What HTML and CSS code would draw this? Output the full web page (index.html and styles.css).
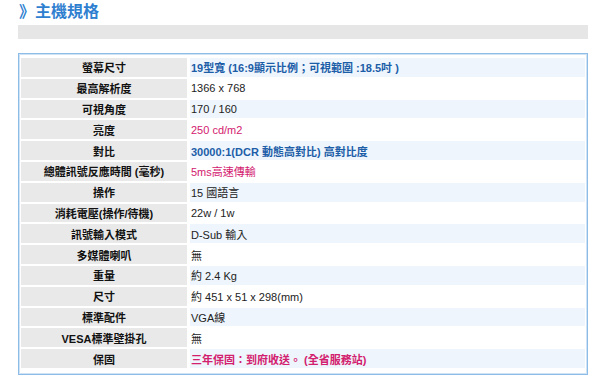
FILE: index.html
```html
<!DOCTYPE html>
<html lang="zh-Hant">
<head>
<meta charset="utf-8">
<link rel="stylesheet" href="styles.css">
</head>
<body>
<div class="page">
  <h2 class="title"><span class="arrow">》</span>主機規格</h2>
  <div class="graybar"></div>
  <div class="specbox">
    <table class="spec">
      <tr class="alt"><th>螢幕尺寸</th><td class="blue">19型寬 (16:9顯示比例；可視範圍 :18.5吋 )</td></tr>
      <tr><th>最高解析度</th><td>1366 x 768</td></tr>
      <tr class="alt"><th>可視角度</th><td>170 / 160</td></tr>
      <tr><th>亮度</th><td class="pink">250 cd/m2</td></tr>
      <tr class="alt"><th>對比</th><td class="blue">30000:1(DCR 動態高對比) 高對比度</td></tr>
      <tr><th>總體訊號反應時間 (毫秒)</th><td class="pink">5ms高速傳輸</td></tr>
      <tr class="alt"><th>操作</th><td>15 國語言</td></tr>
      <tr><th>消耗電壓(操作/待機)</th><td>22w / 1w</td></tr>
      <tr class="alt"><th>訊號輸入模式</th><td>D-Sub 輸入</td></tr>
      <tr><th>多媒體喇叭</th><td>無</td></tr>
      <tr class="alt"><th>重量</th><td>約 2.4 Kg</td></tr>
      <tr><th>尺寸</th><td>約 451 x 51 x 298(mm)</td></tr>
      <tr class="alt"><th>標準配件</th><td>VGA線</td></tr>
      <tr><th>VESA標準壁掛孔</th><td>無</td></tr>
      <tr class="alt"><th>保固</th><td class="pink bold">三年保固：到府收送。 (全省服務站)</td></tr>
    </table>
  </div>
</div>
</body>
</html>
```
FILE: styles.css
```css
html, body {
  margin: 0;
  padding: 0;
  background: #ffffff;
  font-family: "Liberation Sans", "Noto Sans CJK TC", sans-serif;
}
.page {
  padding: 3px 12px 0 18px;
}
.title {
  margin: 0;
  font-size: 16px;
  line-height: 18px;
  font-weight: bold;
  color: #2f7fd0;
}
.arrow {
  display: inline-block;
  width: 16px;
  margin-left: 1px;
}
.graybar {
  height: 14px;
  margin-top: 4px;
  background: #e6e6e6;
}
.specbox {
  margin-top: 14px;
  border: 1px solid #8dbce8;
  box-shadow: inset 0 0 0 1px #cfe3f5;
  padding: 2px 2px 4px 2px;
}
.spec {
  width: 100%;
  border-collapse: separate;
  border-spacing: 0 2px;
  font-size: 11px;
}
.spec th {
  width: 166px;
  background: #e9e9e9;
  color: #111;
  font-weight: bold;
  text-align: center;
  height: 18.8px;
  padding: 0;
  border-right: 3px solid #fff;
}
.spec td {
  color: #222;
  padding: 0 0 0 1px;
  text-align: left;
}
.spec tr.alt td {
  background: #eef5fc;
}
.spec td.blue {
  color: #1c5da8;
  font-weight: bold;
}
.spec td.pink {
  color: #d3206e;
}
.spec td.bold {
  font-weight: bold;
}
```
